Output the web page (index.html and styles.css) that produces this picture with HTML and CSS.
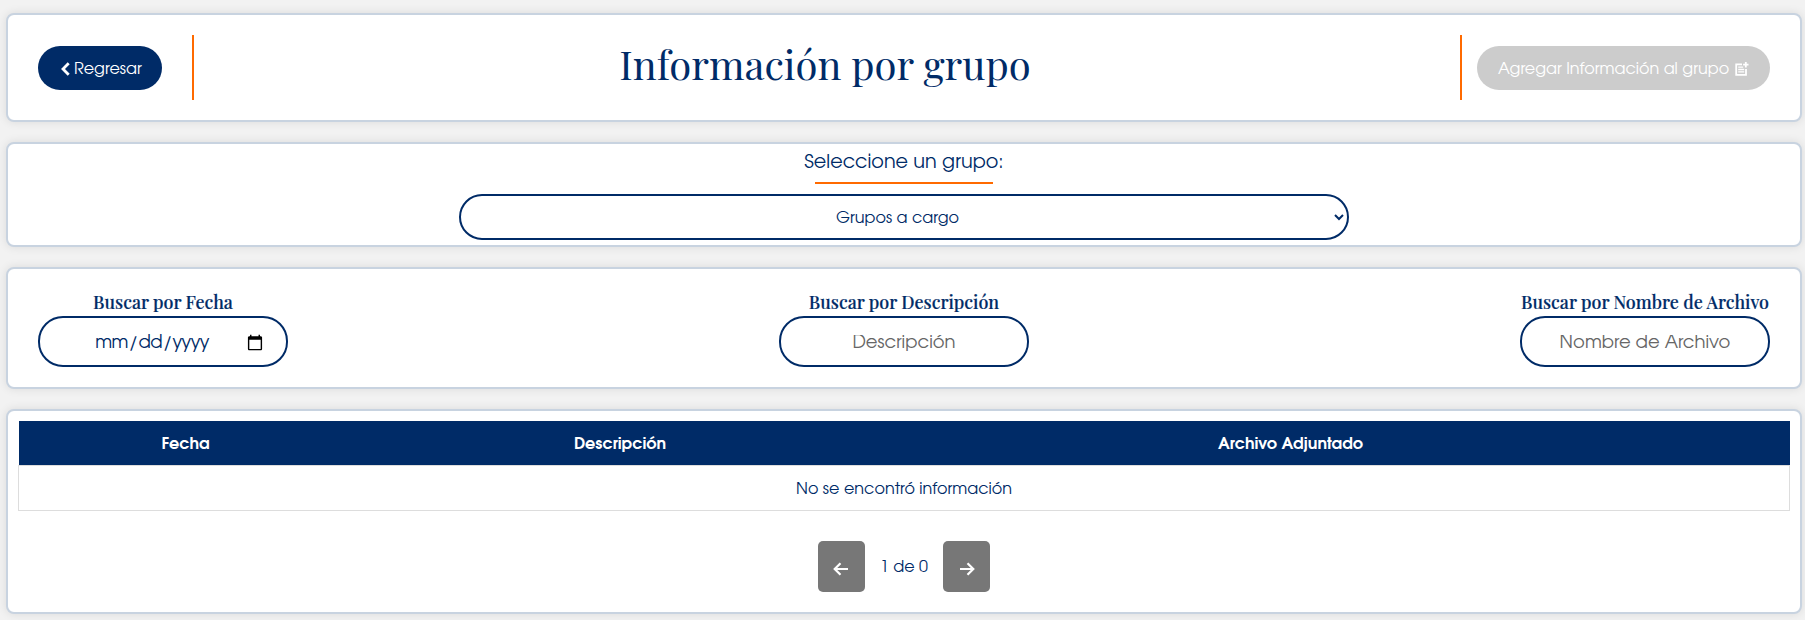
FILE: index.html
```html
<!DOCTYPE html>
<html lang="es">
<head>
<meta charset="utf-8">
<title>Información por grupo</title>
<link rel="stylesheet" href="styles.css">
</head>
<body>
<main class="page">
  <header class="card header">
    <button class="pill back"><svg class="chevron" viewBox="0 0 9 14"><path d="M7.700 1.200 2 7l5.700 5.800"/></svg><span class="pill-text">Regresar</span></button>
    <span class="divider divider-left"></span>
    <h1 class="title">Información por grupo</h1>
    <span class="divider"></span>
    <button class="pill add" disabled><span class="pill-text">Agregar Información al grupo</span><svg class="post-add" viewBox="0 0 14 14"><path class="sheet" d="M7 2.300H1.200V12.800H11V7"/><path class="rows" d="M3.200 5.200h5M3.200 7.500h6M3.200 9.800h6"/><path class="plus" d="M10.800 0v5.400M8.100 2.700h5.400"/></svg></button>
  </header>

  <section class="card group">
    <label class="group-label" for="grupo">Seleccione un grupo:</label>
    <span class="underline"></span>
    <select class="select" id="grupo"><option>Grupos a cargo</option></select>
  </section>

  <section class="card filters">
    <div class="filter"><label class="filter-label" for="fecha">Buscar por Fecha</label><input class="input date" id="fecha" type="date"></div>
    <div class="filter"><label class="filter-label" for="desc">Buscar por Descripción</label><input class="input" id="desc" type="text" placeholder="Descripción"></div>
    <div class="filter"><label class="filter-label" for="archivo">Buscar por Nombre de Archivo</label><input class="input" id="archivo" type="text" placeholder="Nombre de Archivo"></div>
  </section>

  <section class="card results">
    <table class="table">
      <colgroup><col class="c1"><col class="c2"><col class="c3"><col class="c4"></colgroup>
      <thead><tr><th>Fecha</th><th>Descripción</th><th>Archivo Adjuntado</th><th></th></tr></thead>
      <tbody><tr><td colspan="4">No se encontró información</td></tr></tbody>
    </table>
    <nav class="pager">
      <button class="page-btn prev" disabled><svg class="arrow" viewBox="0 0 16 14"><path d="M15 7H2M7.500 1.200 1.700 7l5.800 5.800"/></svg></button>
      <span class="count">1 de 0</span>
      <button class="page-btn" disabled><svg class="arrow" viewBox="0 0 16 14"><path d="M1 7h13M8.500 1.200 14.300 7l-5.800 5.800"/></svg></button>
    </nav>
  </section>
</main>
</body>
</html>
```
FILE: styles.css
```css
* { box-sizing: border-box; }
body {
  margin: 0;
  background: #f2f2f2;
  color: #002b67;
  font-family: "Century Gothic", "URW Gothic", "TeX Gyre Adventor", Questrial, "Didact Gothic", Jost, Lato, sans-serif;
  font-size: 16px;
  overflow: hidden;
}
button, input, select { font-family: inherit; margin: 0; }
.page {
  display: flex;
  flex-direction: column;
  gap: 20px;
  padding: 13px 3px 6px 6px;
}
.card {
  background: #fff;
  border: 2px solid #c8d3e0;
  border-radius: 8px;
  box-shadow: 0 0 10px rgba(0, 0, 0, .1);
}

.header {
  display: flex;
  align-items: center;
  height: 109px;
  padding: 0 30px;
}
.pill {
  display: flex;
  align-items: center;
  height: 44px;
  border: 0;
  border-radius: 22px;
  color: #fff;
  font-size: 16px;
  white-space: nowrap;
}
.back { width: 124px; background: #002b67; padding: 0 0 0 23px; gap: 4px; }
.pill-text { padding-top: 3px; }
.chevron { width: 9px; height: 14px; fill: none; stroke: #fff; stroke-width: 2.800; margin-top: 2px; }
.divider { flex: none; width: 2px; height: 65px; background: #ff6a00; margin: 0 15px 0 0; }
.divider-left { margin: 0 0 0 30px; }
.title {
  flex: 1;
  margin: 0 0 7px;
  padding-right: 4px;
  text-align: center;
  font: 400 40px/56px "Playfair Display", "Liberation Serif", serif;
}
.add { width: 293px; background: #ccc; padding: 0 0 0 21px; gap: 6px; }
.post-add { width: 14px; height: 14px; fill: none; stroke: #fff; margin-top: 2px; }
.sheet { stroke-width: 1.800; }
.rows { stroke-width: 1.300; }
.plus { stroke-width: 1.800; }

.group {
  display: flex;
  flex-direction: column;
  align-items: center;
  height: 105px;
}
.group-label { font-size: 19.200px; line-height: 24px; margin-top: 7px; }
.underline { flex: none; width: 178px; height: 2px; background: #ff6a00; margin: 7px 0 10px; }
.select {
  width: 890px;
  height: 46px;
  border: 2px solid #002b67;
  border-radius: 23px;
  background: #fff;
  color: #002b67;
  font-size: 16px;
  text-align: center;
  padding: 2px 1px 0 0;
}

.filters {
  display: flex;
  justify-content: space-between;
  height: 122px;
  padding: 20px 30px 0;
}
.filter { display: flex; flex-direction: column; align-items: center; width: 250px; }
.filter-label {
  font: 500 17.900px/26px "Playfair Display", "Liberation Serif", serif;
  margin-bottom: 1px;
  white-space: nowrap;
  -webkit-text-stroke: .2px #002b67;
}
.input {
  width: 250px;
  height: 51px;
  border: 2px solid #002b67;
  border-radius: 25px;
  background: #fff;
  color: #002b67;
  font-size: 18px;
  text-align: center;
  padding: 2px 10px 0;
}
.date { padding: 2px 20px 0; letter-spacing: -.6px; }
.input::placeholder { color: #666; }

.results { height: 205px; padding: 10px 10px 0; }
.table { width: 1771px; border-collapse: collapse; table-layout: fixed; }
.c1 { width: 334px; }
.c2 { width: 535px; }
.c3 { width: 806px; }
.c4 { width: 96px; }
.table th { height: 44px; padding: 3px 0 0; background: #002b67; color: #fff; font-size: 16px; }
.table td { height: 45px; padding: 3px 0 0; border: 1px solid #ddd; text-align: center; }
.pager { display: flex; justify-content: center; align-items: center; margin-top: 30px; }
.page-btn {
  display: flex;
  align-items: center;
  justify-content: center;
  width: 47px;
  height: 51px;
  padding: 5px 0 0;
  border: 0;
  border-radius: 5px;
  background: #777;
}
.prev { padding-right: 1px; }
.arrow { width: 16px; height: 14px; fill: none; stroke: #fff; stroke-width: 2.200; }
.count { width: 78px; padding-top: 2px; text-align: center; }
```
